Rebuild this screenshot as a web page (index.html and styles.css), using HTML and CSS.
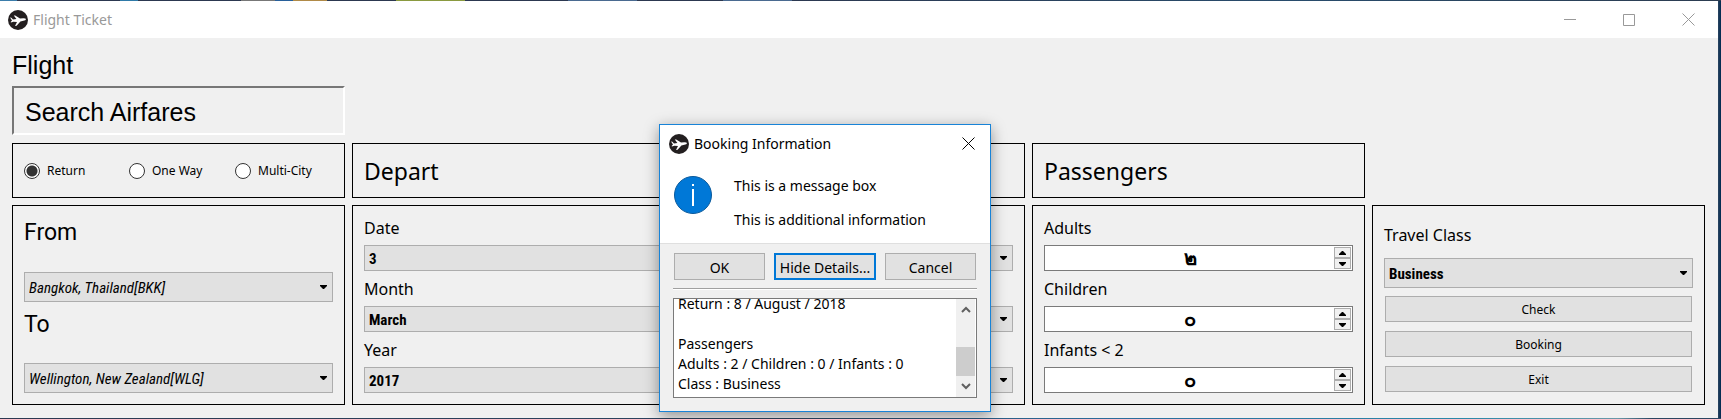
FILE: index.html
```
<!DOCTYPE html>
<html lang="en">
<head>
<meta charset="utf-8">
<title>Flight Ticket</title>
<link rel="stylesheet" href="styles.css">
</head>
<body>
<svg class="symbols" aria-hidden="true">
  <symbol id="plane" viewBox="0 0 20 20">
    <circle cx="10" cy="10" r="10" fill="#231f20"/>
    <path d="M2 7.6 3.4 7.8 5 9.6 8.4 9 5.8 5.6 7.2 5.4 12 8.4 15.4 8.2Q18 8.3 18 9.2 17.8 10.2 15.4 10.8L12.4 11.4 8.6 15.8 7 16 9 12 5.4 11.8 3 12.4 2.6 12 4 10.6Z" fill="#fff"/>
  </symbol>
  <symbol id="down" viewBox="0 0 7 4"><path d="M0 0h7v1L4 4H3L0 1Z"/></symbol>
  <symbol id="up" viewBox="0 0 7 4"><path d="M3 0h1l3 3v1H0V3Z"/></symbol>
  <symbol id="cross" viewBox="0 0 13 13"><path d="M.5.5l12 12M12.5.5l-12 12" fill="none" stroke="currentColor"/></symbol>
</svg>

<main class="window">
  <header class="titlebar">
    <svg class="app-icon"><use href="#plane"/></svg>
    <span class="window-title">Flight Ticket</span>
    <div class="window-controls">
      <button type="button" aria-label="Minimize"><svg viewBox="0 0 13 13"><path d="M0 6.5h12" stroke="currentColor"/></svg></button>
      <button type="button" aria-label="Maximize"><svg viewBox="0 0 13 13"><path d="M.5 1.5h11v11H.5z" fill="none" stroke="currentColor"/></svg></button>
      <button type="button" aria-label="Close"><svg><use href="#cross"/></svg></button>
    </div>
  </header>

  <form class="form">
    <h1 class="heading">Flight</h1>
    <h2 class="search">Search Airfares</h2>

    <fieldset class="panel trip">
      <label><input type="radio" name="trip" checked>Return</label>
      <label><input type="radio" name="trip">One Way</label>
      <label><input type="radio" name="trip">Multi-City</label>
    </fieldset>
    <h2 class="panel section">Depart</h2>
    <div class="panel section"></div>
    <h2 class="panel section">Passengers</h2>

    <section class="panel route">
      <label for="from">From</label>
      <div class="combo tall slanted"><select id="from"><option>Bangkok, Thailand[BKK]</option></select><svg><use href="#down"/></svg></div>
      <label for="to">To</label>
      <div class="combo tall slanted"><select id="to"><option>Wellington, New Zealand[WLG]</option></select><svg><use href="#down"/></svg></div>
    </section>

    <section class="panel fields">
      <label for="d-date">Date</label>
      <div class="combo"><select id="d-date"><option>3</option></select><svg><use href="#down"/></svg></div>
      <label for="d-month">Month</label>
      <div class="combo"><select id="d-month"><option>March</option></select><svg><use href="#down"/></svg></div>
      <label for="d-year">Year</label>
      <div class="combo"><select id="d-year"><option>2017</option></select><svg><use href="#down"/></svg></div>
    </section>

    <section class="panel fields unlabelled">
      <div class="combo"><select aria-label="Return date"><option></option></select><svg><use href="#down"/></svg></div>
      <div class="combo"><select aria-label="Return month"><option></option></select><svg><use href="#down"/></svg></div>
      <div class="combo"><select aria-label="Return year"><option></option></select><svg><use href="#down"/></svg></div>
    </section>

    <section class="panel fields">
      <label for="adults">Adults</label>
      <div class="spin"><input id="adults" type="text" value="๒"><div class="steps"><button type="button" aria-label="More adults"><svg><use href="#up"/></svg></button><button type="button" aria-label="Fewer adults"><svg><use href="#down"/></svg></button></div></div>
      <label for="children">Children</label>
      <div class="spin"><input id="children" type="text" value="๐"><div class="steps"><button type="button" aria-label="More children"><svg><use href="#up"/></svg></button><button type="button" aria-label="Fewer children"><svg><use href="#down"/></svg></button></div></div>
      <label for="infants">Infants &lt; 2</label>
      <div class="spin"><input id="infants" type="text" value="๐"><div class="steps"><button type="button" aria-label="More infants"><svg><use href="#up"/></svg></button><button type="button" aria-label="Fewer infants"><svg><use href="#down"/></svg></button></div></div>
    </section>

    <section class="panel fields travel">
      <label for="class">Travel Class</label>
      <div class="combo tall"><select id="class"><option>Business</option></select><svg><use href="#down"/></svg></div>
      <button class="push" type="button">Check</button>
      <button class="push" type="button">Booking</button>
      <button class="push" type="button">Exit</button>
    </section>
  </form>
</main>

<div class="dialog" role="dialog" aria-labelledby="dialog-title">
  <header class="dialog-title">
    <svg class="app-icon"><use href="#plane"/></svg>
    <span id="dialog-title">Booking Information</span>
    <button type="button" aria-label="Close"><svg><use href="#cross"/></svg></button>
  </header>
  <div class="message">
    <svg class="info" viewBox="0 0 38 38"><circle cx="19" cy="19" r="18.5" fill="#0078d7" stroke="#0a5a9c"/><path d="M18 8h2v2h-2zM18 13h2v17h-2z" fill="#fff"/></svg>
    <div class="message-text"><p>This is a message box</p><p>This is additional information</p></div>
  </div>
  <div class="dialog-body">
    <div class="actions">
      <button type="button">OK</button>
      <button class="default" type="button">Hide Details...</button>
      <button type="button">Cancel</button>
    </div>
    <hr>
    <div class="details">
      <textarea id="details" aria-label="Details" readonly>Return : 8 / August / 2018

Passengers
Adults : 2 / Children : 0 / Infants : 0
Class : Business</textarea>
      <div class="scrollbar">
        <button type="button" aria-label="Scroll up"><svg viewBox="0 0 10 7"><path d="M1 6l4-4 4 4" fill="none" stroke="#606060" stroke-width="2"/></svg></button>
        <div class="thumb"></div>
        <button type="button" aria-label="Scroll down"><svg viewBox="0 0 10 7"><path d="M1 1l4 4 4-4" fill="none" stroke="#606060" stroke-width="2"/></svg></button>
      </div>
    </div>
  </div>
</div>
<script src="script.js"></script>
</body>
</html>
```
FILE: styles.css
```
* { box-sizing: border-box; }

body {
  margin: 0;
  padding: 1px 3px 1px 0;
  background:
    linear-gradient(90deg, #3b7dab 0 1%, #2c3850 1% 7%, #2f7aa8 7% 8%, #2c3850 8% 14%, #777 14% 16%, #28609a 16% 17%, #b08a48 17% 19%, #2c3850 19% 23%, #8a9a40 23% 27%, #2c3850 27% 33%, #4a6a90 33% 37%, #2c3850 37% 42%, #4a6a90 42% 46%, #2c3850 46%, #284c6c 75%, #2c3c50) top / 100% 1px no-repeat,
    linear-gradient(90deg, #2c3850, #2c4560 45%, #2b6c9c 65%, #2b88a8 85%, #6a98a8 94%, #2b4560 96%) bottom / 100% 1px no-repeat,
    linear-gradient(90deg, #2b4560, #002850) right / 3px 100% no-repeat;
  color: #000;
  font-family: "Noto Sans", "Open Sans", sans-serif;
  font-size: 16px;
}

h1, h2, p, fieldset { margin: 0; padding: 0; border: 0; font-weight: 400; }
button, input, select, textarea { font: inherit; color: inherit; margin: 0; padding: 0; border-radius: 0; }
.symbols { position: absolute; width: 0; height: 0; }

.window { background: #f0f0f0; }

.titlebar {
  display: flex;
  align-items: center;
  height: 37px;
  padding-left: 8px;
  background: #fff;
  color: #999;
  font-size: 14px;
}
.app-icon { width: 20px; height: 20px; }
.window-title { margin-left: 5px; }
.window-controls { display: flex; margin-left: auto; }
.window-controls button { width: 59px; height: 37px; border: 0; background: none; }
.window-controls svg { display: block; width: 13px; height: 13px; margin: auto; }

.form {
  display: grid;
  grid-template-columns: repeat(5, minmax(0, 1fr));
  grid-template-rows: 41px 50px 55px 200px;
  gap: 7px;
  padding: 0 13px 13px 12px;
}
.heading, .search { font-family: "Liberation Sans", Arial, sans-serif; font-size: 25px; }
.heading { grid-column: 1 / -1; padding-top: 13px; line-height: 28px; }
.search {
  grid-column: 1;
  align-self: start;
  padding: 3px 11px 0;
  border: 2px solid;
  border-color: #777 #fff #fff #777;
  line-height: 42px;
}

.panel { border: 1px solid #000; padding: 11px; }
.trip { grid-column: 1; display: grid; grid-template-columns: 105px 106px auto; align-items: center; font-size: 12px; }
.trip label { display: flex; align-items: center; gap: 7px; white-space: nowrap; }
.trip input {
  appearance: none;
  width: 16px;
  height: 16px;
  border: 1px solid #333;
  border-radius: 50%;
  background: #fff;
}
.trip input:checked { background: radial-gradient(circle, #333 0 5px, #fff 6px); }
.section { padding: 1px 11px 0; font-size: 23px; line-height: 52px; }

.route, .fields { display: flex; flex-direction: column; gap: 7px; }
.route { grid-column: 1; }
.fields label { height: 21px; line-height: 23px; }
.route label { height: 48px; font-family: Roboto, sans-serif; font-size: 23px; line-height: 32px; }
.route label ~ label { height: 47px; }
.unlabelled .combo { margin-top: 28px; }

.combo { display: grid; height: 26px; align-items: center; }
.combo.tall { height: 30px; }
.combo select, .combo svg { grid-area: 1 / 1; }
.combo select {
  appearance: none;
  width: 100%;
  height: 100%;
  padding: 1px 4px 0;
  border: 1px solid #adadad;
  background: #e1e1e1;
  font-family: "Agency FB", "Roboto Condensed", "Open Sans Condensed", Roboto, sans-serif;
  font-size: 15px;
  font-weight: 700;
}
.combo.slanted select { font-style: italic; font-weight: 400; }
.combo svg { justify-self: end; width: 7px; height: 4px; margin-right: 6px; pointer-events: none; }

.spin { display: flex; height: 26px; padding: 1px; border: 1px solid #7a7a7a; background: #fff; }
.spin input { flex: 1; min-width: 0; border: 0; background: none; font-size: 20px; font-weight: 600; text-align: center; outline: 0; }
.steps { display: flex; flex-direction: column; width: 17px; }
.steps button { flex: 1; display: grid; place-items: center; border: 1px solid #adadad; background: #f0f0f0; }
.steps svg { width: 7px; height: 4px; }

.travel label { height: 34px; line-height: 36px; }
.push { height: 26px; margin: 1px; border: 1px solid #adadad; background: #e1e1e1; font-size: 12px; }

.dialog {
  position: absolute;
  top: 124px;
  left: 659px;
  width: 332px;
  border: 1px solid #1883d7;
  background: #f0f0f0;
  box-shadow: 0 4px 14px rgba(0, 0, 0, .4);
  font-size: 14px;
}
.dialog-title { display: flex; align-items: center; gap: 5px; height: 37px; padding: 0 15px 0 9px; background: #fff; }
.dialog-title button { width: 13px; height: 13px; margin-left: auto; border: 0; background: none; }
.dialog-title button svg { display: block; width: 13px; height: 13px; }
.message { display: flex; gap: 22px; height: 82px; padding: 14px; border-bottom: 1px solid #dfdfdf; background: #fff; }
.info { width: 38px; height: 38px; }
.message-text { display: grid; gap: 14px; align-content: start; line-height: 20px; }
.dialog-body { padding: 9px 13px 13px; }
.actions { display: flex; justify-content: space-between; padding: 0 1px; }
.actions button { width: 91px; height: 27px; padding-top: 1px; border: 1px solid #adadad; background: #e1e1e1; }
.actions .default { width: 102px; border: 2px solid #0078d7; }
hr { height: 2px; margin: 8px 0; border: 0; border-top: 1px solid #a0a0a0; background: #fff; }
.details { display: flex; height: 100px; border: 1px solid #7a7a7a; background: #fff; }
.details textarea {
  flex: 1;
  min-width: 0;
  padding: 0 0 3px 4px;
  border: 0;
  outline: 0;
  resize: none;
  overflow: hidden;
  background: none;
  line-height: 20px;
}
.scrollbar { display: flex; flex-direction: column; justify-content: flex-end; width: 19px; margin-right: 1px; background: #f0f0f0; }
.scrollbar button { display: grid; place-items: center; height: 21px; border: 0; background: none; }
.scrollbar button:first-child { margin-bottom: auto; }
.scrollbar svg { width: 10px; height: 7px; }
.thumb { height: 29px; background: #cdcdcd; }
```
FILE: script.js
```
const details = document.getElementById("details");
details.scrollTop = details.scrollHeight;
```
